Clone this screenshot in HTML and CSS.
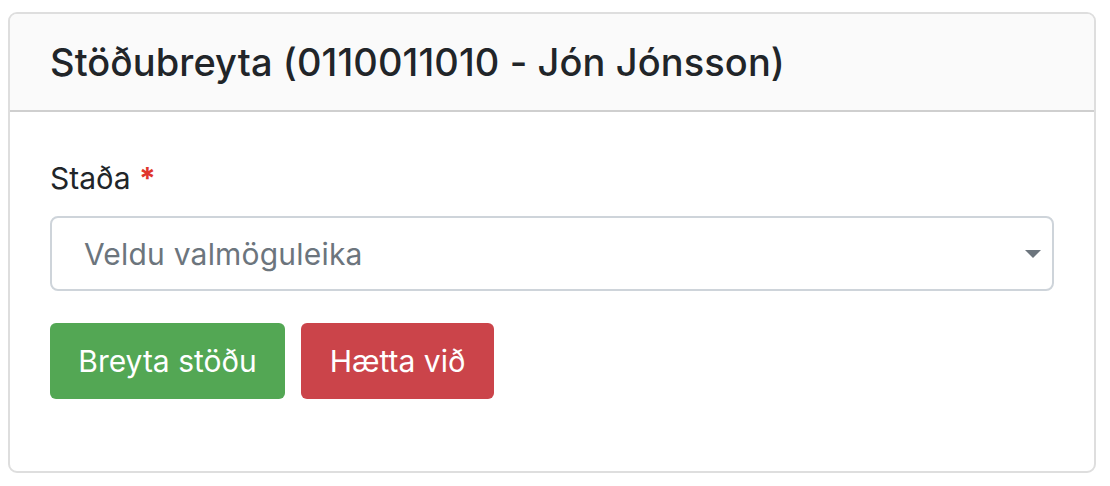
FILE: index.html
```html
<!DOCTYPE html>
<html lang="is">
<head>
<meta charset="utf-8">
<link rel="stylesheet" href="styles.css">
</head>
<body>
<div class="card">
  <div class="card-header">
    <h1 class="card-title">Stöðubreyta (0110011010 - Jón Jónsson)</h1>
  </div>
  <div class="card-body">
    <label class="form-label">Staða <span class="req">*</span></label>
    <div class="select">
      <span class="placeholder">Veldu valmöguleika</span>
      <svg class="caret" width="16" height="8" viewBox="0 0 16 8"><path d="M0 0h16L8 8z" fill="#6c757d"/></svg>
    </div>
    <div class="actions">
      <button class="btn btn-success">Breyta stöðu</button>
      <button class="btn btn-danger">Hætta við</button>
    </div>
  </div>
</div>
</body>
</html>
```

FILE: styles.css
```css
html, body {
  margin: 0;
  padding: 0;
  background: #fff;
}
body {
  font-family: Inter, "Noto Sans", "Liberation Sans", sans-serif;
  color: #212529;
  padding: 12px 14px 0 8px;
}
.card {
  border: 2px solid #dedede;
  border-radius: 9px;
  box-sizing: border-box;
  height: 461px;
  overflow: hidden;
}
.card-header {
  background: #fafafa;
  border-bottom: 2px solid #cfcfcf;
  height: 98px;
  box-sizing: border-box;
  display: flex;
  align-items: center;
  padding: 0 40px;
}
.card-title {
  margin: 0;
  font-size: 38px;
  font-weight: 500;
  letter-spacing: 0.1px;
  color: #212529;
  line-height: 1;
}
.card-body {
  padding: 50px 40px 0 40px;
}
.form-label {
  display: block;
  font-size: 30px;
  line-height: 32px;
  color: #212529;
}
.req {
  color: #e0362c;
  font-weight: 700;
}
.select {
  margin-top: 22px;
  height: 75px;
  box-sizing: border-box;
  border: 2px solid #ced4da;
  border-radius: 8px;
  display: flex;
  align-items: center;
  justify-content: space-between;
  padding: 0 11px 0 32px;
}
.placeholder {
  font-size: 30px;
  letter-spacing: 0.2px;
  color: #6c757d;
}
.caret {
  display: block;
}
.actions {
  margin-top: 32px;
  display: flex;
  gap: 16px;
}
.btn {
  font-family: inherit;
  font-size: 30px;
  color: #fff;
  border: none;
  border-radius: 6px;
  height: 76px;
  padding: 0;
}
.btn-success {
  background: #53a754;
  width: 235px;
}
.btn-danger {
  background: #cb444a;
  width: 193px;
}
```
